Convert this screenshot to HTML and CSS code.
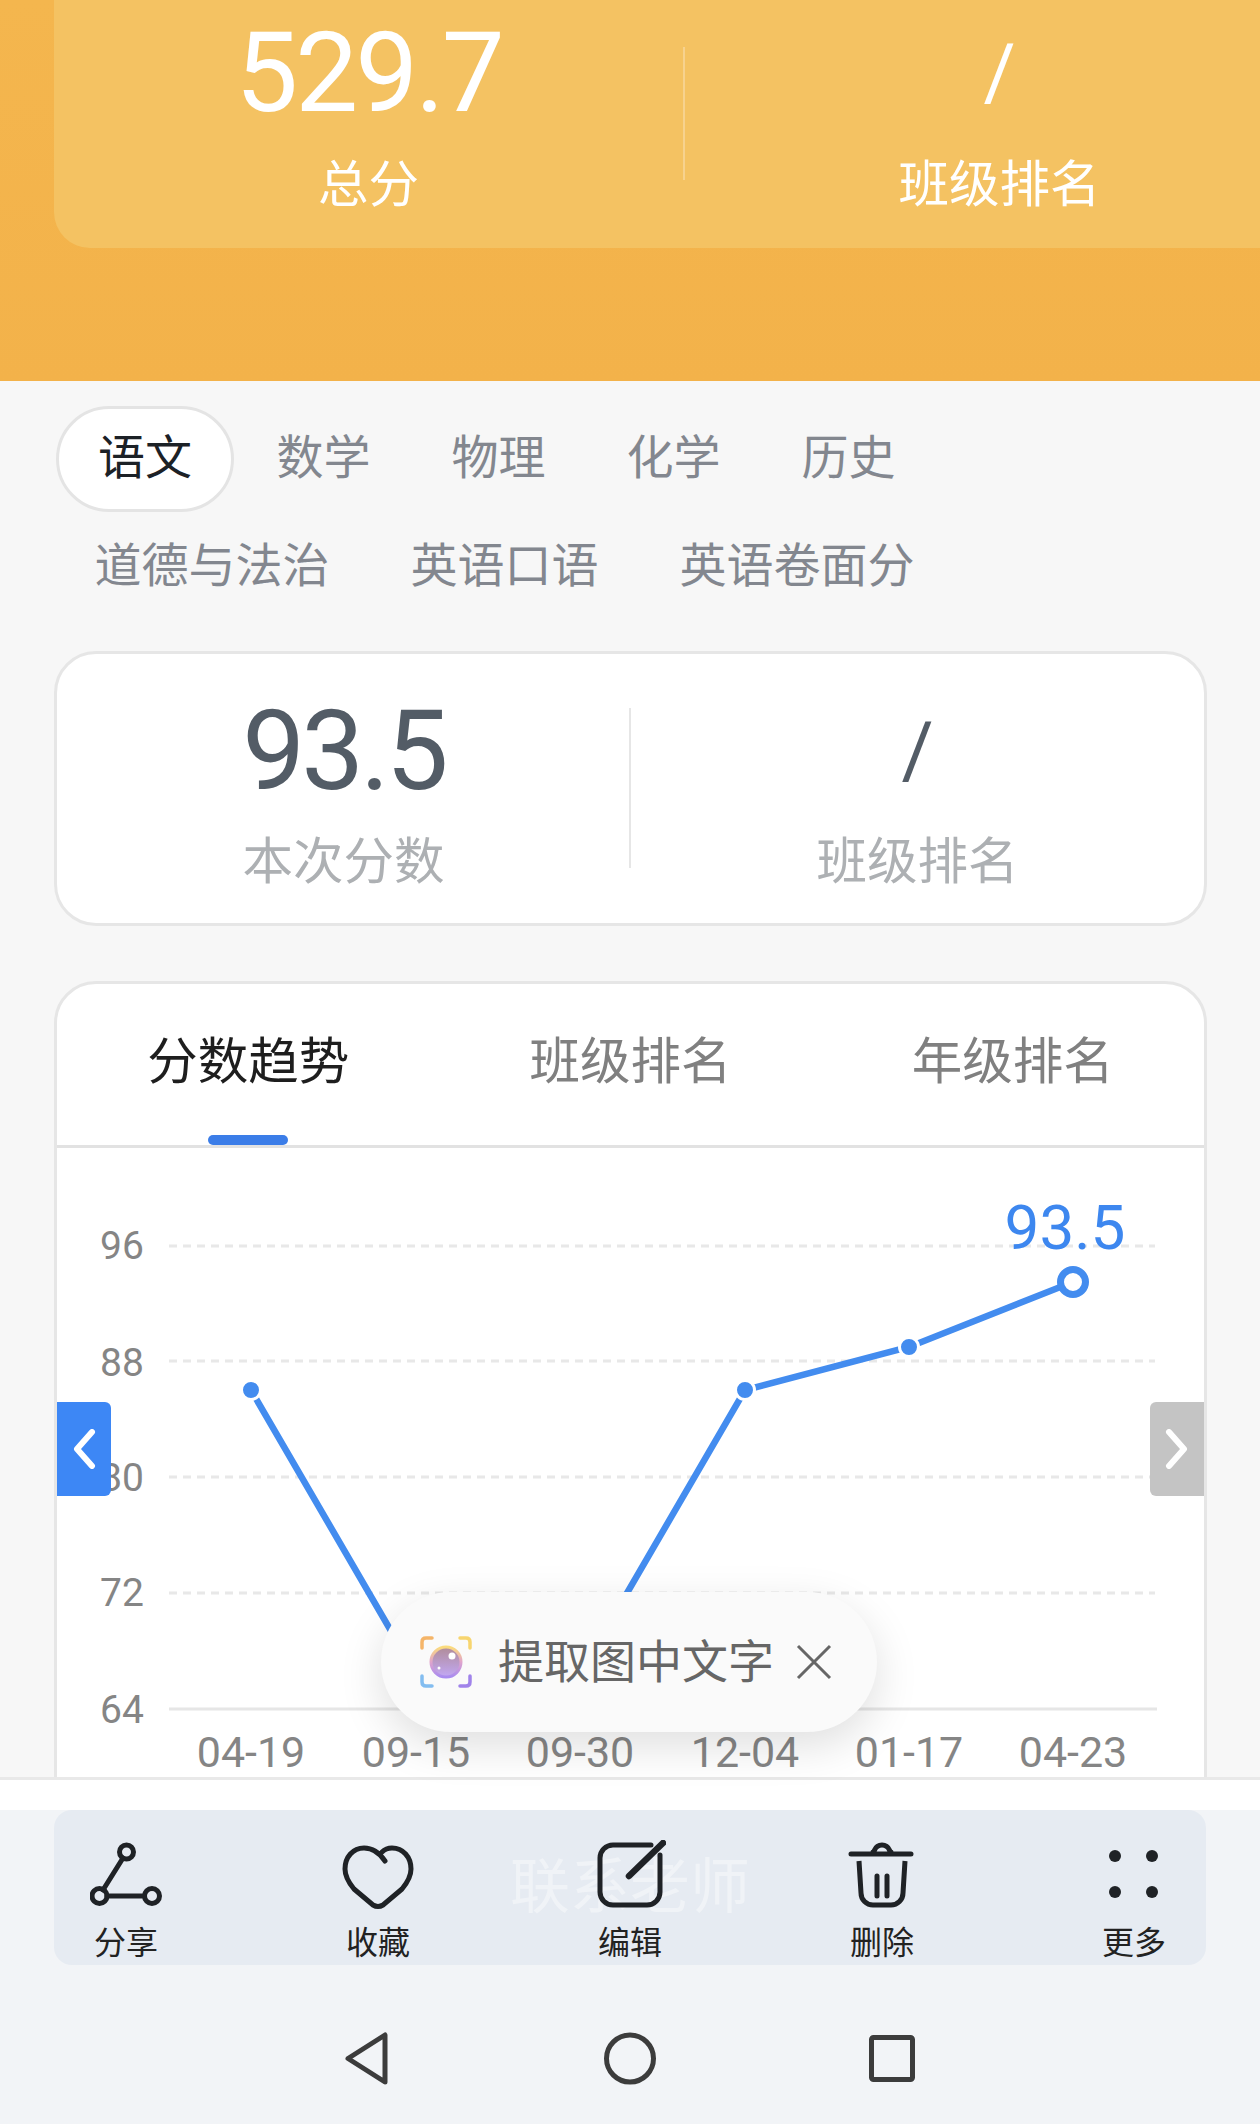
FILE: index.html
```html
<!DOCTYPE html>
<html lang="zh-CN">
<head>
    <meta charset="UTF-8">
    <meta name="viewport" content="width=device-width, initial-scale=1.0">
    <title>成绩详情</title>
    <link rel="stylesheet" href="styles.css">
</head>
<body>
<div class="page">
    <!-- Total score header -->
    <header class="hero">
        <div class="hero-card">
            <div class="score-col">
                <div class="score-num">529.7</div>
                <div class="score-label">总分</div>
            </div>
            <div class="score-line hero-line"></div>
            <div class="score-col">
                <div class="score-num slash">/</div>
                <div class="score-label">班级排名</div>
            </div>
        </div>
    </header>

    <main class="content">
        <!-- Subjects -->
        <div class="subjects">
            <div class="subject active">语文</div>
            <div class="subject">数学</div>
            <div class="subject">物理</div>
            <div class="subject">化学</div>
            <div class="subject">历史</div>
            <div class="subject">道德与法治</div>
            <div class="subject">英语口语</div>
            <div class="subject">英语卷面分</div>
        </div>

        <!-- Subject score -->
        <section class="card score-card">
            <div class="score-col">
                <div class="score-num">93.5</div>
                <div class="score-label">本次分数</div>
            </div>
            <div class="score-line card-line"></div>
            <div class="score-col">
                <div class="score-num slash">/</div>
                <div class="score-label">班级排名</div>
            </div>
        </section>

        <!-- Trend chart -->
        <section class="card chart-card">
            <div class="chart-tabs">
                <div class="chart-tab active">分数趋势</div>
                <div class="chart-tab">班级排名</div>
                <div class="chart-tab">年级排名</div>
            </div>
            <div class="chart-wrap">
                <svg class="chart" viewBox="57 1148 1147 629" width="1147" height="629">
                    <g class="grid">
                        <line x1="169" y1="1246" x2="1155" y2="1246"></line>
                        <line x1="169" y1="1361" x2="1155" y2="1361"></line>
                        <line x1="169" y1="1477" x2="1155" y2="1477"></line>
                        <line x1="169" y1="1593" x2="1155" y2="1593"></line>
                    </g>
                    <line class="axis" x1="169" y1="1709" x2="1157" y2="1709"></line>
                    <g class="y-label">
                        <text x="122" y="1259">96</text>
                        <text x="122" y="1376">88</text>
                        <text x="122" y="1491">80</text>
                        <text x="122" y="1606">72</text>
                        <text x="122" y="1723">64</text>
                    </g>
                    <g class="x-label">
                        <text x="251" y="1767">04-19</text>
                        <text x="416" y="1767">09-15</text>
                        <text x="580" y="1767">09-30</text>
                        <text x="745" y="1767">12-04</text>
                        <text x="909" y="1767">01-17</text>
                        <text x="1073" y="1767">04-23</text>
                    </g>
                    <polyline class="trend" points="251,1390 416,1674 580,1674 745,1390 909,1347 1073,1282"></polyline>
                    <g class="dot">
                        <circle cx="251" cy="1390" r="9.500"></circle>
                        <circle cx="745" cy="1390" r="9.500"></circle>
                        <circle cx="909" cy="1347" r="9.500"></circle>
                    </g>
                    <circle class="dot-last" cx="1073" cy="1282" r="12.500"></circle>
                    <text class="last-value" x="1065" y="1249">93.5</text>
                </svg>
                <div class="chart-arrow prev">
                    <svg viewBox="0 0 24 40" width="24" height="40"><path d="M20 3 5 20l15 17"></path></svg>
                </div>
                <div class="chart-arrow next">
                    <svg viewBox="0 0 24 40" width="24" height="40"><path d="M4 3l15 17L4 37"></path></svg>
                </div>
            </div>
        </section>
    </main>

    <!-- Bottom actions -->
    <footer class="bottom">
        <div class="actions">
            <div class="watermark">联系老师</div>
            <div class="action-grid">
                <div class="action">
                    <svg viewBox="0 0 72 72" width="72" height="72">
                        <circle cx="36.500" cy="12" r="7"></circle>
                        <circle cx="9.500" cy="56" r="7.500"></circle>
                        <circle cx="62" cy="56" r="7.500"></circle>
                        <path d="M33 18 13 50M17 56h37"></path>
                    </svg>
                    <span>分享</span>
                </div>
                <div class="action">
                    <svg viewBox="0 0 72 72" width="72" height="72">
                        <path d="M43 21C37 12 30 8 22 8 11 8 3 17 3 29c0 8 4 14 9 20l19 16q5 3 10 0l19-16c5-6 9-12 9-20C69 17 61 8 50 8c-4 0-7 1-10 4"></path>
                    </svg>
                    <span>收藏</span>
                </div>
                <div class="action">
                    <svg viewBox="0 0 72 72" width="72" height="72">
                        <path d="M57 5H19A13 13 0 0 0 6 18v34a13 13 0 0 0 13 13h34a13 13 0 0 0 13-13V15"></path>
                        <path class="pen" d="M69 3 35 36"></path>
                    </svg>
                    <span>编辑</span>
                </div>
                <div class="action">
                    <svg viewBox="0 0 72 72" width="72" height="72">
                        <path d="M5 14h60M27 12c2 0 1-7 9-7s7 7 9 7"></path>
                        <path class="bin" d="M13 21l2 32a12 12 0 0 0 12 12h18a12 12 0 0 0 12-12l2-32"></path>
                        <path d="M31 36v20M41 36v20"></path>
                    </svg>
                    <span>删除</span>
                </div>
                <div class="action">
                    <svg viewBox="0 0 72 72" width="72" height="72">
                        <g class="solid">
                            <circle cx="17" cy="16" r="6"></circle>
                            <circle cx="54" cy="16" r="6"></circle>
                            <circle cx="17" cy="52" r="6"></circle>
                            <circle cx="54" cy="52" r="6"></circle>
                        </g>
                    </svg>
                    <span>更多</span>
                </div>
            </div>
        </div>

        <nav class="sys-nav">
            <svg viewBox="0 0 72 72" width="72" height="72"><path d="M55 13v47L18 36.500z"></path></svg>
            <svg viewBox="0 0 72 72" width="72" height="72"><circle cx="36" cy="36.500" r="23.500"></circle></svg>
            <svg viewBox="0 0 72 72" width="72" height="72"><rect x="13.500" y="15.500" width="41" height="42" rx="2"></rect></svg>
        </nav>
    </footer>

    <!-- Floating hint -->
    <div class="ocr-tip">
        <svg class="ocr-icon" viewBox="0 0 52 52" width="52" height="52">
            <defs>
                <linearGradient id="lens" x1="0" y1="0" x2="0" y2="1">
                    <stop offset="0" stop-color="#fbdc7c"></stop>
                    <stop offset="0.5" stop-color="#e0a4cc"></stop>
                    <stop offset="1" stop-color="#a98cf0"></stop>
                </linearGradient>
                <linearGradient id="lensFill" x1="0" y1="0" x2="0" y2="1">
                    <stop offset="0" stop-color="#b08c98"></stop>
                    <stop offset="1" stop-color="#c2a8f5"></stop>
                </linearGradient>
            </defs>
            <path class="corner" stroke="#f5b569" d="M2 12V6q0-4 4-4h6"></path>
            <path class="corner" stroke="#f7d56f" d="M40 2h6q4 0 4 4v6"></path>
            <path class="corner" stroke="#83bdf0" d="M2 40v6q0 4 4 4h6"></path>
            <path class="corner" stroke="#a083ea" d="M50 40v6q0 4-4 4h-6"></path>
            <circle cx="26" cy="26" r="15" fill="url(#lensFill)" stroke="url(#lens)" stroke-width="3"></circle>
            <circle cx="32" cy="20" r="3.500" fill="#fff"></circle>
            <circle cx="19" cy="32" r="1.500" fill="#fff"></circle>
        </svg>
        <span class="ocr-text">提取图中文字</span>
        <svg class="ocr-close" viewBox="0 0 36 36" width="36" height="36"><path d="M2 2l32 32M34 2 2 34"></path></svg>
    </div>
</div>
</body>
</html>
```

FILE: styles.css
```css
body {
    margin: 0;
    padding: 0;
    font-family: Roboto, "Noto Sans CJK SC", sans-serif;
    background-color: #f7f7f7;
}

.page {
    position: relative;
    width: 1260px;
    height: 2124px;
    overflow: hidden;
}

/* header */
.hero {
    height: 381px;
    padding-left: 54px;
    box-sizing: border-box;
    background: linear-gradient(180deg, #f4b64e, #f3b24a);
    overflow: hidden;
}

.hero-card {
    display: flex;
    width: 1260px;
    height: 248px;
    padding-top: 18px;
    box-sizing: border-box;
    border-radius: 0 0 0 36px;
    background-color: #f4c262;
    color: #fff;
}

.score-col {
    flex: 1;
    text-align: center;
}

.score-num {
    font-size: 112px;
    line-height: 110px;
    letter-spacing: -3px;
}

.score-num.slash {
    font-size: 78px;
    letter-spacing: 0;
}

.score-label {
    margin-top: 27px;
    font-size: 50.500px;
    line-height: 60px;
}

.score-line {
    width: 2px;
}

.hero-line {
    height: 133px;
    margin-top: 29px;
    background-color: #f7d28e;
}

/* subject tabs */
.content {
    height: 1399px;
    box-sizing: border-box;
    border-bottom: 3px solid #e9e9e9;
    overflow: hidden;
}

.subjects {
    display: flex;
    flex-wrap: wrap;
    row-gap: 2px;
    padding: 25px 54px 0 54px;
}

.subject {
    height: 106px;
    padding: 0 37.500px;
    box-sizing: border-box;
    border: 3px solid transparent;
    border-radius: 53px;
    font-size: 47px;
    line-height: 98px;
    color: #83878f;
}

.subject.active {
    margin: 0 2px;
    padding: 0 39px;
    background-color: #fff;
    border-color: #e4e4e4;
    color: #1c2126;
}

/* cards */
.card {
    width: 1153px;
    margin-left: 54px;
    box-sizing: border-box;
    border: 3px solid #e6e6e6;
    border-radius: 42px;
    background-color: #fff;
}

.score-card {
    display: flex;
    height: 275px;
    margin-top: 31px;
    padding-top: 42px;
}

.score-card .score-num {
    color: #535c66;
    letter-spacing: -4px;
}

.score-card .score-num.slash {
    letter-spacing: 0;
}

.score-card .score-label {
    margin-top: 26px;
    color: #adb0b3;
}

.card-line {
    height: 160px;
    margin: 12px 0 0 -1px;
    background-color: #e6e6e6;
}

.chart-card {
    height: 900px;
    margin-top: 55px;
    overflow: hidden;
}

.chart-tabs {
    display: flex;
    border-bottom: 3px solid #e2e2e2;
}

.chart-tab {
    position: relative;
    flex: 1;
    height: 161px;
    padding-top: 48px;
    box-sizing: border-box;
    text-align: center;
    font-size: 50.500px;
    line-height: 60px;
    color: #808080;
}

.chart-tab.active {
    color: #1e1e1e;
}

.chart-tab.active::after {
    content: "";
    position: absolute;
    left: 50%;
    bottom: 0;
    width: 80px;
    height: 10px;
    margin-left: -40px;
    border-radius: 5px;
    background-color: #3b7de8;
}

/* chart */
.chart-wrap {
    position: relative;
    height: 629px;
}

.chart {
    display: block;
}

.grid line {
    stroke: #e8e8e8;
    stroke-width: 3;
    stroke-dasharray: 8 6;
}

.axis {
    stroke: #e6e6e6;
    stroke-width: 3;
}

.y-label text,
.x-label text {
    font-size: 39px;
    fill: #858585;
    text-anchor: middle;
}

.x-label text {
    font-size: 43px;
}

.trend {
    fill: none;
    stroke: #438cef;
    stroke-width: 6.500;
}

.dot circle {
    fill: #438cef;
    stroke: #fff;
    stroke-width: 3;
}

.dot-last {
    fill: #fff;
    stroke: #438cef;
    stroke-width: 7;
}

.last-value {
    font-size: 62px;
    fill: #3d87ef;
    text-anchor: middle;
}

.chart-arrow {
    position: absolute;
    top: 254px;
    display: flex;
    align-items: center;
    justify-content: center;
    width: 54px;
    height: 94px;
}

.chart-arrow svg {
    fill: none;
    stroke: #fff;
    stroke-width: 6;
    stroke-linecap: round;
    stroke-linejoin: round;
}

.chart-arrow.prev {
    left: 0;
    border-radius: 0 6px 6px 0;
    background-color: #3d87f5;
}

.chart-arrow.next {
    right: 0;
    border-radius: 6px 0 0 6px;
    background-color: #c4c4c4;
}

/* bottom */
.bottom {
    height: 344px;
    padding-top: 30px;
    box-sizing: border-box;
    background: linear-gradient(180deg, #fff 30px, #f2f4f7 30px);
}

.actions {
    position: relative;
    height: 155px;
    margin: 0 54px;
    padding-top: 30px;
    box-sizing: border-box;
    border-radius: 18px;
    background-color: #e6ebf2;
}

.watermark {
    position: absolute;
    left: 0;
    right: 0;
    top: 48px;
    text-align: center;
    font-size: 60px;
    line-height: 60px;
    color: rgba(255, 255, 255, 0.4);
}

.action-grid {
    position: relative;
    display: grid;
    grid-template-columns: repeat(5, 1fr);
    margin: 0 -54px;
}

.action {
    display: flex;
    flex-direction: column;
    align-items: center;
    font-size: 32px;
    line-height: 44px;
    color: #222;
}

.action svg {
    display: block;
    margin-bottom: 9px;
    fill: none;
    stroke: #1f2226;
    stroke-width: 5;
    stroke-linecap: round;
    stroke-linejoin: round;
}

.action .pen {
    stroke-width: 6.500;
}

.action .bin {
    stroke-linecap: butt;
}

.action .solid {
    fill: #1f2226;
    stroke: none;
}

.sys-nav {
    display: grid;
    grid-template-columns: repeat(3, 264px);
    justify-content: center;
    justify-items: center;
    padding-top: 57px;
}

.sys-nav svg {
    display: block;
    fill: none;
    stroke: #3c3c3c;
    stroke-width: 5;
    stroke-linejoin: round;
}

/* floating hint */
.ocr-tip {
    position: absolute;
    left: 381px;
    top: 1592px;
    display: flex;
    align-items: center;
    width: 496px;
    height: 140px;
    padding-left: 39px;
    box-sizing: border-box;
    border-radius: 70px;
    background-color: #fafafa;
    box-shadow: 0 14px 44px rgba(0, 0, 0, 0.13);
}

.ocr-text {
    margin-left: 26px;
    font-size: 46px;
    line-height: 60px;
    color: #666;
}

.ocr-close {
    margin-left: 22px;
    fill: none;
    stroke: #666;
    stroke-width: 3;
}

.corner {
    fill: none;
    stroke-width: 3.500;
    stroke-linecap: round;
}
```
